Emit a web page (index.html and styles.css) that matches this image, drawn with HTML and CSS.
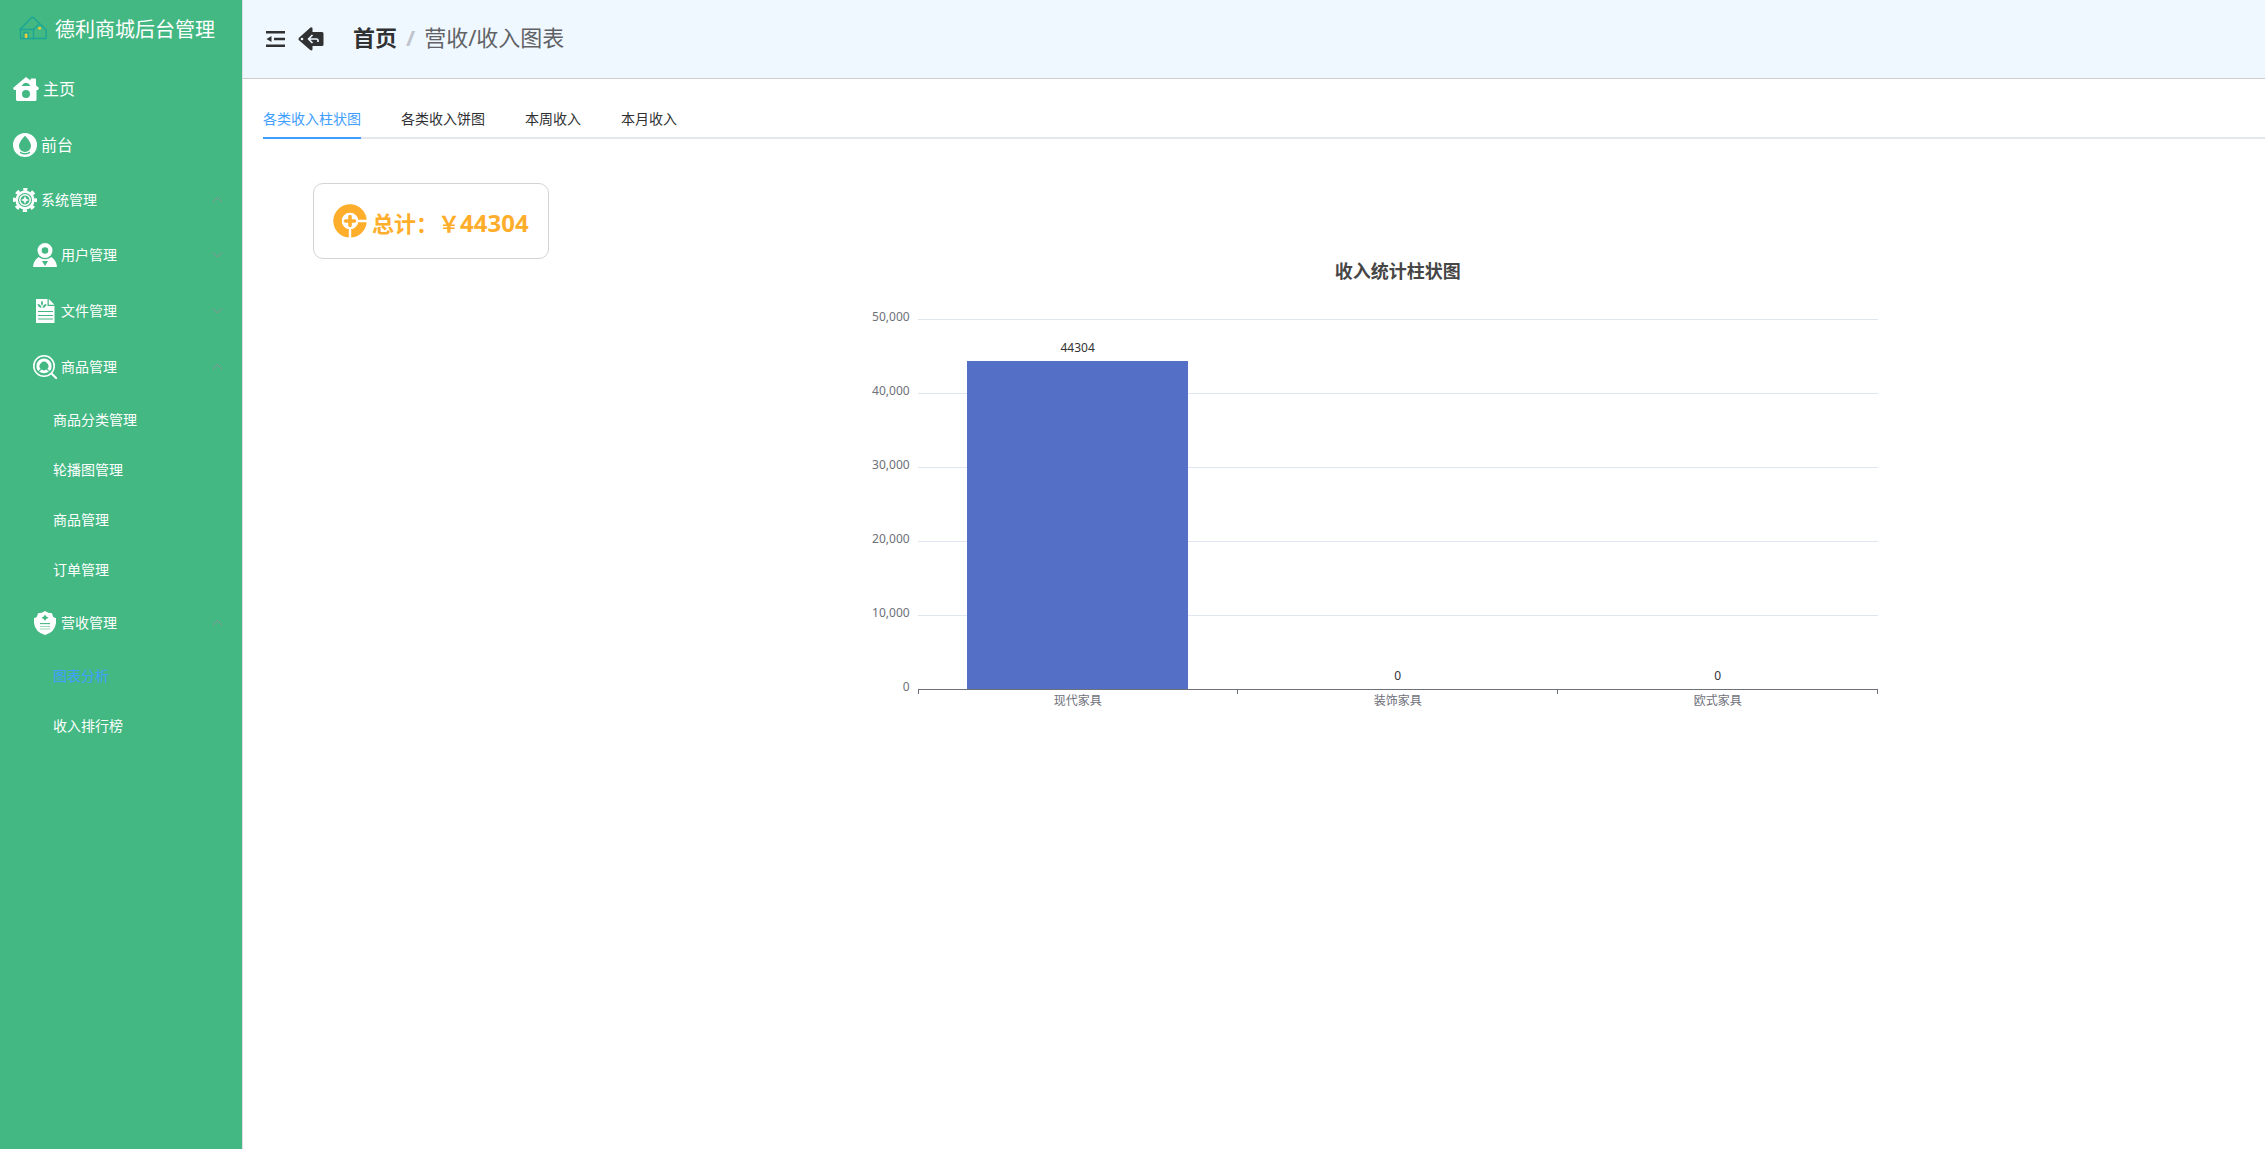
FILE: index.html
```html
<!DOCTYPE html>
<html lang="zh-CN">
<head>
<meta charset="utf-8">
<meta name="viewport" content="width=device-width, initial-scale=1">
<title>德利商城后台管理</title>
<link rel="stylesheet" href="styles.css">
</head>
<body>
<div class="layout">
  <aside class="sidebar">
    <div class="brand">
      <svg class="brand-icon" viewBox="0 0 28 24" fill="none" stroke="#1aa596" stroke-width="1.3" stroke-linejoin="round" stroke-linecap="round" aria-hidden="true">
        <path d="M1 13.500 12.500 1.500 H14.500 L20.500 7.500"/>
        <path d="M1 13.500H14.500L20.500 7.500 27.200 14V22.500H1.500V13.500"/>
        <path d="M14.500 13.500V22.500M5 22.500V16.500H9V22.500"/>
        <path d="M6.500 18h1.500v3.500H6.500zM20 11.500h1.600v1.600H20z" fill="#ffd02e" stroke="#ffd02e" stroke-width=".8"/>
      </svg>
      <span>德利商城后台管理</span>
    </div>
    <nav class="menu" aria-label="主菜单">
      <a class="item item-large" href="#">
        <svg class="icon icon-wide" viewBox="0 0 26 24" fill="#fff" aria-hidden="true">
          <path fill-rule="evenodd" d="M13 0 17.500 3.600V2.200Q17.500 1.500 18.300 1.500H22Q23 1.500 23 2.500V8.200L26 11 25 13H23.500V22.500Q23.500 24 22 24H4.500Q3 24 3 22.500V13H1L0 11ZM8.500 9H17.500Q15.500 5.800 13 5.700 10.500 5.800 8.500 9ZM13 13a4 4 0 1 0 0 8 4 4 0 0 0 0-8Z"/>
        </svg>
        <span>主页</span>
      </a>
      <a class="item item-large" href="#">
        <svg class="icon" viewBox="0 0 24 24" fill="#fff" aria-hidden="true">
          <path fill-rule="evenodd" d="M12 0a12 12 0 1 0 0 24 12 12 0 0 0 0-24ZM12 2.800Q18 9 18 13A6 6 0 0 1 6 13Q6 9 12 2.800ZM7 18.600Q12 21.600 17 18.600V20Q12 23 7 20Z"/>
        </svg>
        <span>前台</span>
      </a>
      <button class="item" type="button" aria-expanded="true">
        <svg class="icon" viewBox="0 0 24 24" fill="none" stroke="#fff" aria-hidden="true">
          <circle cx="12" cy="12" r="10.600" stroke-width="2.800" stroke-dasharray="4.200 4.125" stroke-dashoffset="2.100"/>
          <circle cx="12" cy="12" r="8.300" stroke-width="2.600"/>
          <circle cx="12" cy="12" r="5.200" stroke-width="1.500"/>
          <path d="M12 8 13.300 10.700 16 12 13.300 13.300 12 16 10.700 13.300 8 12 10.700 10.700Z" fill="#fff" stroke="none"/>
        </svg>
        <span>系统管理</span>
        <svg class="chevron" viewBox="0 0 12 12" aria-hidden="true"><path d="M2 8 6.500 3.500 11 8"/></svg>
      </button>
      <button class="item level-2" type="button" aria-expanded="false">
        <svg class="icon" viewBox="0 0 24 24" fill="#fff" aria-hidden="true">
          <path fill-rule="evenodd" d="M12 0a7.500 7.500 0 1 0 0 15 7.500 7.500 0 0 0 0-15ZM12 4.200a3.300 3.300 0 1 1 0 6.600 3.300 3.300 0 0 1 0-6.600Z"/>
          <path fill-rule="evenodd" d="M5.500 14Q12 18.500 18.500 14 23.500 17.500 24 24H0Q.5 17.500 5.500 14ZM9 18 12 23 15 18Z"/>
        </svg>
        <span>用户管理</span>
        <svg class="chevron" viewBox="0 0 12 12" aria-hidden="true"><path d="M2 3.500 6.500 8 11 3.500"/></svg>
      </button>
      <button class="item level-2" type="button" aria-expanded="false">
        <svg class="icon" viewBox="0 0 24 24" aria-hidden="true">
          <path fill="#fff" d="M3 0H14.500V7H21.500V24H3ZM15.800 0 21.500 5.700H15.800Z"/>
          <path fill="none" stroke="#43b883" stroke-width="1.200" d="M5 12.500H20M5 16.500H20M5 20H20"/>
          <path fill="#43b883" d="M9 1.500Q11 4 9 7 7 4 9 1.500ZM4.500 5Q8 5 8.500 9 5 8.500 4.500 5ZM13.500 5Q10 5 9.500 9 13 8.500 13.500 5Z"/>
        </svg>
        <span>文件管理</span>
        <svg class="chevron" viewBox="0 0 12 12" aria-hidden="true"><path d="M2 3.500 6.500 8 11 3.500"/></svg>
      </button>
      <button class="item level-2" type="button" aria-expanded="true">
        <svg class="icon" viewBox="0 0 24 24" fill="none" stroke="#fff" aria-hidden="true">
          <circle cx="11" cy="11" r="10.200" stroke-width="1.600"/>
          <path d="M18.500 18.500 24 24" stroke-width="2"/>
          <path d="M6.400 15A6 6 0 1 1 15.600 15" stroke-width="3.200"/>
          <path d="M6 16.500 9 14.500Q11 16.500 13 14.500L16 16.500Q11 20 6 16.500Z" fill="#fff" stroke="none"/>
        </svg>
        <span>商品管理</span>
        <svg class="chevron" viewBox="0 0 12 12" aria-hidden="true"><path d="M2 8 6.500 3.500 11 8"/></svg>
      </button>
      <a class="item level-3" href="#">商品分类管理</a>
      <a class="item level-3" href="#">轮播图管理</a>
      <a class="item level-3" href="#">商品管理</a>
      <a class="item level-3" href="#">订单管理</a>
      <button class="item level-2" type="button" aria-expanded="true">
        <svg class="icon" viewBox="0 0 24 24" aria-hidden="true">
          <path fill="#fff" d="M12 0Q15 2.200 19 2.200L20 5.500Q21.500 7 23 7V12Q22 21 12 24 2 21 1 12V7Q2.500 7 4 5.500L5 2.200Q9 2.200 12 0Z"/>
          <path fill="#43b883" d="M12 3.500 13.200 5.600 15.600 6.800 13.200 8 12 10 10.800 8 8.400 6.800 10.800 5.600Z"/>
          <path stroke="#43b883" stroke-width="1.100" d="M7 12.600H17"/>
          <path stroke="#9bdabd" stroke-width="1" d="M7 15.500H17M7 18H17"/>
        </svg>
        <span>营收管理</span>
        <svg class="chevron" viewBox="0 0 12 12" aria-hidden="true"><path d="M2 8 6.500 3.500 11 8"/></svg>
      </button>
      <a class="item level-3 is-active" href="#" aria-current="page">图表分析</a>
      <a class="item level-3" href="#">收入排行榜</a>
    </nav>
  </aside>

  <div class="page">
    <header class="topbar">
      <button class="tool" type="button" aria-label="折叠菜单">
        <svg class="fold-icon" viewBox="0 0 19 16" aria-hidden="true">
          <path fill="#303133" d="M0 0H19V2.600H0ZM8 6.700H19V9.300H8ZM0 13.400H19V16H0ZM5.500 5V11L.5 8Z"/>
        </svg>
      </button>
      <button class="tool" type="button" aria-label="返回">
        <svg class="back-icon" viewBox="0 0 26 24" aria-hidden="true">
          <path fill="#303133" d="M12.200 .8Q13.500-.3 14.500 1V5H24Q25.500 5 25.500 6.500V17.500Q25.500 19 24 19H14.500V22.500Q13.800 24.200 12.200 23L1 13.300Q0 12 1 10.700Z"/>
          <path fill="none" stroke="#f0f8ff" stroke-width="1.700" stroke-linejoin="round" d="M14.500 8 10.500 12 14.500 16M10.500 12H18.500Q20 12 20 13.500V15"/>
          <circle cx="4" cy="12" r="1.300" fill="#f0f8ff"/>
        </svg>
      </button>
      <nav class="breadcrumb" aria-label="面包屑">
        <a class="crumb-home" href="#">首页</a>
        <span class="crumb-sep">/</span>
        <span>营收/收入图表</span>
      </nav>
    </header>

    <main class="content">
      <div class="tabs" role="tablist">
        <button class="tab is-active" type="button" role="tab" aria-selected="true">各类收入柱状图</button>
        <button class="tab" type="button" role="tab" aria-selected="false">各类收入饼图</button>
        <button class="tab" type="button" role="tab" aria-selected="false">本周收入</button>
        <button class="tab" type="button" role="tab" aria-selected="false">本月收入</button>
      </div>

      <div class="total">
        <svg class="total-icon" viewBox="0 0 34 34" aria-hidden="true">
          <circle cx="17" cy="17" r="12.400" fill="none" stroke="#ffae2b" stroke-width="8.600"/>
          <path d="M17 20V34M20 17H34" stroke="#fff" stroke-width="2.400"/>
          <circle cx="17" cy="17" r="8.200" fill="#fff"/>
          <path d="M17 12.500V21.500M12.500 17H21.500" stroke="#ffae2b" stroke-width="3.600" stroke-linecap="round"/>
        </svg>
        <span class="total-text">总计：￥<span class="total-value">44304</span></span>
      </div>

      <div class="chart-row">
        <figure class="chart">
          <figcaption class="chart-title">收入统计柱状图</figcaption>
          <div class="y-axis">
            <span>50,000</span><span>40,000</span><span>30,000</span><span>20,000</span><span>10,000</span><span>0</span>
          </div>
          <div class="grid-lines"><i></i><i></i><i></i><i></i><i></i></div>
          <div class="bars">
            <div class="slot"><span>44304</span><div class="bar" style="height:88.608%"></div></div>
            <div class="slot"><span>0</span><div class="bar" style="height:0%"></div></div>
            <div class="slot"><span>0</span><div class="bar" style="height:0%"></div></div>
          </div>
          <div class="x-axis"><span>现代家具</span><span>装饰家具</span><span>欧式家具</span></div>
        </figure>
      </div>
    </main>
  </div>
</div>
</body>
</html>
```
FILE: styles.css
```css
*,
*::before,
*::after {
  box-sizing: border-box;
}

body {
  margin: 0;
  font: 14px/20px "Noto Sans", "Noto Sans CJK SC", sans-serif;
  color: #303133;
  background: #fff;
}

a {
  color: inherit;
  text-decoration: none;
}

button {
  padding: 0;
  border: 0;
  background: none;
  font: inherit;
  color: inherit;
  cursor: pointer;
}

svg {
  display: block;
  flex: none;
}

.layout {
  display: flex;
  min-height: 100vh;
}

/* Sidebar */
.sidebar {
  flex: none;
  width: 243px;
  border-right: 1px solid #dcdfe6;
  background: #43b883;
  color: #fff;
}

.brand {
  display: flex;
  align-items: center;
  gap: 8px;
  height: 59px;
  padding-left: 19px;
  font-size: 20px;
}

.brand-icon {
  width: 28px;
  height: 24px;
  margin-bottom: 4px;
}

.menu {
  display: flex;
  flex-direction: column;
}

.item {
  display: flex;
  align-items: center;
  gap: 4px;
  height: 56px;
  padding: 2px 19px 0 13px;
  text-align: left;
}

.item-large {
  padding-top: 4px;
  font-size: 16px;
}

.level-2 {
  padding-top: 0;
  padding-left: 33px;
}

.level-3 {
  height: 50px;
  padding-top: 0;
  padding-left: 53px;
}

.item.is-active {
  color: #409eff;
}

.icon {
  width: 24px;
  height: 24px;
}

.icon-wide {
  width: 26px;
}

.chevron {
  width: 12px;
  height: 12px;
  margin-left: auto;
  fill: none;
  stroke: #909399;
  stroke-width: 1;
}

/* Top bar */
.topbar {
  display: flex;
  align-items: center;
  height: 79px;
  padding-left: 23px;
  border-bottom: 1px solid #ccc;
  background: #f0f8ff;
}

.page {
  flex: 1;
  min-width: 0;
}

.tool {
  margin-right: 13px;
}

.fold-icon {
  width: 19px;
  height: 16px;
}

.back-icon {
  width: 26px;
  height: 24px;
}

.breadcrumb {
  display: flex;
  align-items: center;
  gap: 9px;
  margin-left: 16px;
  padding-bottom: 4px;
  font-size: 22px;
  line-height: 32px;
  color: #606266;
}

.crumb-home {
  font-weight: 700;
  color: #303133;
}

.crumb-sep {
  font-weight: 700;
  color: #c0c4cc;
}

/* Content */
.content {
  padding: 20px 0 20px 20px;
}

.tabs {
  display: flex;
  gap: 40px;
  height: 40px;
  box-shadow: inset 0 -2px #e4e7ed;
}

.tab.is-active {
  color: #409eff;
  box-shadow: inset 0 -2px #409eff;
}

.total {
  display: flex;
  align-items: center;
  gap: 5px;
  width: max-content;
  height: 76px;
  margin: 44px 0 0 50px;
  padding: 0 19px;
  border: 1px solid #d3d3d3;
  border-radius: 10px;
  color: #ffae2b;
}

.total-icon {
  width: 34px;
  height: 34px;
}

.total-text {
  padding-top: 4px;
  font-size: 22px;
  font-weight: 700;
  line-height: 32px;
}

.total-value {
  font-size: 24px;
}

/* Bar chart */
.chart-row {
  display: grid;
  grid-template-columns: 2fr minmax(0, 1200px) 1fr;
}

.chart {
  grid-column: 2;
  display: grid;
  grid-template-columns: 1fr 8fr 1fr;
  grid-template-rows: 60px 370px auto;
  margin: 0;
  font-size: 12px;
  line-height: 16px;
  color: #6e7079;
}

.chart-title {
  grid-column: 2;
  font-size: 18px;
  font-weight: 700;
  line-height: 24px;
  text-align: center;
  color: #464646;
}

.y-axis {
  grid-area: 2 / 1;
  display: flex;
  flex-direction: column;
  justify-content: space-between;
  margin: -10px 8px -6px 0;
  text-align: right;
}

.grid-lines {
  grid-area: 2 / 2;
  display: grid;
}

.grid-lines i {
  border-top: 1px solid #e0e6f1;
}

.bars {
  grid-area: 2 / 2;
  display: grid;
  grid-template-columns: repeat(3, 1fr);
}

.slot {
  display: flex;
  flex-direction: column;
  align-items: center;
  justify-content: flex-end;
  color: #333;
}

.slot span {
  margin-bottom: 5px;
}

.bar {
  flex: none;
  width: 69%;
  background: #5470c6;
}

.x-axis {
  grid-area: 3 / 2;
  display: grid;
  grid-template-columns: repeat(3, 1fr);
  border-top: 1px solid #6e7079;
  background:
    linear-gradient(#6e7079, #6e7079) 0 0 / 1px 4px,
    linear-gradient(#6e7079, #6e7079) 33.333% 0 / 1px 4px,
    linear-gradient(#6e7079, #6e7079) 66.667% 0 / 1px 4px,
    linear-gradient(#6e7079, #6e7079) 100% 0 / 1px 4px;
  background-repeat: no-repeat;
  text-align: center;
}

.x-axis span {
  padding-top: 3px;
}
```
